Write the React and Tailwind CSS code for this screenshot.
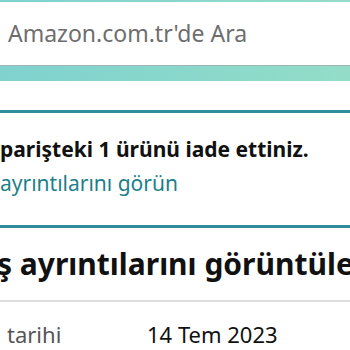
export default function App() {
  return (
    <div className="w-[350px] h-[350px] overflow-hidden bg-white" style={{ fontFamily: '"Noto Sans", "Open Sans", sans-serif' }}>
      <div className="bg-gradient-to-r from-[#7fd2cf] to-[#93ddc8] pt-[2px] pb-[15px]">
        <div className="h-[64px] bg-white border-b border-[#9fb4b4] flex items-center pl-[8px]">
          <span className="text-[23px] text-[#6e6e6e] whitespace-nowrap">Amazon.com.tr'de Ara</span>
        </div>
      </div>
      <div className="mt-[29px] border-y-[3px] border-[#2e8c9b] h-[118px] pt-[22px] whitespace-nowrap">
        <div className="text-[21px] font-bold text-[#111] leading-[28px]">parişteki 1 ürünü iade ettiniz.</div>
        <div className="mt-[6px] text-[21px] text-[#1c7f8c] leading-[28px]">ayrıntılarını görün</div>
      </div>
      <div className="mt-[16px] -ml-[3px] whitespace-nowrap text-[30px] font-bold text-[#111] leading-[40px]">ş ayrıntılarını görüntüleyin</div>
      <div className="mt-[16px] h-[2px] bg-[#dddddd]"></div>
      <div className="mt-[18px] flex whitespace-nowrap text-[22px] leading-[28px]">
        <span className="w-[147px] pl-[7px] text-[#555]">tarihi</span>
        <span className="text-[#111]">14 Tem 2023</span>
      </div>
    </div>
  );
}
